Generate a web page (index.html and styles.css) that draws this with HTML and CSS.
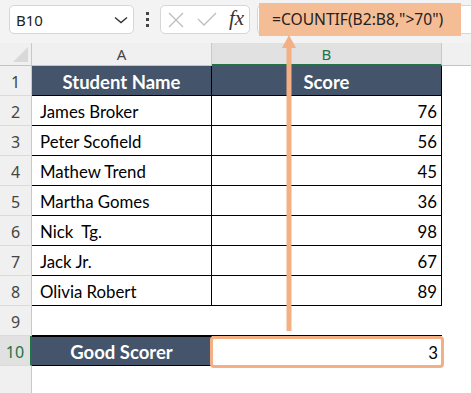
FILE: index.html
```html
<!DOCTYPE html>
<html>
<head>
<meta charset="utf-8">
<link rel="stylesheet" href="styles.css">
</head>
<body>
<div class="toolbar">
  <div class="namebox">
    <span class="ref">B10</span>
    <svg class="chev" width="14" height="8" viewBox="0 0 14 8"><path d="M1 1.5 L7 6.5 L13 1.5" fill="none" stroke="#333" stroke-width="1.4"/></svg>
  </div>
  <div class="dots"><i></i><i></i><i></i></div>
  <div class="fxbox">
    <svg class="ico" width="16" height="16" viewBox="0 0 16 16"><path d="M1 1 L15 15 M15 1 L1 15" stroke="#bdbdbd" stroke-width="1.3" fill="none"/></svg>
    <svg class="ico chk" width="20" height="14" viewBox="0 0 20 14"><path d="M1 7 L7 13 L19 1" stroke="#bdbdbd" stroke-width="1.3" fill="none"/></svg>
    <span class="fx">fx</span>
  </div>
  <div class="formula">
    <span class="hl">=COUNTIF(B2:B8,"&gt;70")</span>
  </div>
</div>

<div class="sheet">
  <div class="colhead">
    <div class="corner"><span class="tri"></span></div>
    <div class="ch cha">A</div>
    <div class="ch chb">B</div>
    <div class="ch chrest"></div>
  </div>

  <div class="row">
    <div class="rh">1</div>
    <div class="c a head">Student Name</div>
    <div class="c b head">Score</div>
  </div>
  <div class="row">
    <div class="rh">2</div>
    <div class="c a">James Broker</div>
    <div class="c b num">76</div>
  </div>
  <div class="row">
    <div class="rh">3</div>
    <div class="c a">Peter Scofield</div>
    <div class="c b num">56</div>
  </div>
  <div class="row">
    <div class="rh">4</div>
    <div class="c a">Mathew Trend</div>
    <div class="c b num">45</div>
  </div>
  <div class="row">
    <div class="rh">5</div>
    <div class="c a">Martha Gomes</div>
    <div class="c b num">36</div>
  </div>
  <div class="row">
    <div class="rh">6</div>
    <div class="c a">Nick&nbsp; Tg.</div>
    <div class="c b num">98</div>
  </div>
  <div class="row">
    <div class="rh">7</div>
    <div class="c a">Jack Jr.</div>
    <div class="c b num">67</div>
  </div>
  <div class="row">
    <div class="rh">8</div>
    <div class="c a">Olivia Robert</div>
    <div class="c b num">89</div>
  </div>
  <div class="row">
    <div class="rh">9</div>
    <div class="c a empty"></div>
    <div class="c b empty"></div>
  </div>
  <div class="row">
    <div class="rh sel">10</div>
    <div class="c a head good">Good Scorer</div>
    <div class="c b num result">3</div>
  </div>
  <div class="row">
    <div class="rh last"></div>
  </div>

  <svg class="arrow" width="16" height="300" viewBox="0 0 16 300">
    <path d="M5.5 12 H10.5 V297 H5.5 Z" fill="#f4b084"/>
    <path d="M8 1 L15 14 L1 14 Z" fill="#f4b084"/>
  </svg>
</div>
</body>
</html>
```
FILE: styles.css
```css
* { box-sizing: border-box; }
body {
  margin: 0;
  width: 471px;
  height: 393px;
  overflow: hidden;
  background: #ffffff;
  font-family: "Noto Sans", "Open Sans", sans-serif;
  position: relative;
}
.toolbar {
  height: 43px;
  background: #f3f3f3;
  display: flex;
  align-items: flex-start;
  padding: 5px 0 0 9px;
}
.namebox {
  width: 125px;
  height: 29px;
  background: #fff;
  border: 1px solid #d6d6d6;
  border-radius: 5px;
  display: flex;
  align-items: center;
  justify-content: space-between;
  padding: 0 5px 0 6px;
}
.ref { font-size: 15px; color: #222; }
.chev { margin-top: 1px; }
.dots {
  width: 26px;
  height: 29px;
  display: flex;
  flex-direction: column;
  align-items: center;
  justify-content: center;
  gap: 3px;
}
.dots i { display: block; width: 3px; height: 3px; background: #444; }
.fxbox {
  width: 90px;
  height: 29px;
  background: #fff;
  border: 1px solid #d6d6d6;
  border-radius: 5px;
  display: flex;
  align-items: center;
  padding-left: 7px;
}
.chk { margin-left: 13px; margin-top: -2px; }
.fx {
  margin-left: 12px;
  font-family: "Liberation Serif", serif;
  font-style: italic;
  font-size: 21px;
  color: #333;
  margin-top: -2px;
}
.formula {
  margin-left: 7px;
  flex: 1;
  height: 29px;
  background: #fff;
  border: 1px solid #d6d6d6;
  border-right: none;
  border-radius: 5px 0 0 5px;
  position: relative;
}
.hl {
  position: absolute;
  left: 1px;
  top: -3px;
  width: 202px;
  height: 33px;
  background: #f5bd95;
  font-size: 15.6px;
  color: #222;
  line-height: 33px;
  padding-left: 13px;
  white-space: nowrap;
}

.sheet { position: relative; }
.colhead {
  display: flex;
  height: 23px;
  background: #f0f0f0;
  border-bottom: 1px solid #c4c4c4;
}
.corner {
  width: 32px;
  border-right: 1px solid #c8c8c8;
  position: relative;
}
.tri {
  position: absolute;
  right: 3px;
  bottom: 3px;
  width: 0; height: 0;
  border-left: 15px solid transparent;
  border-bottom: 15px solid #d9d9d9;
}
.ch {
  font-size: 15px;
  color: #444;
  display: flex;
  align-items: center;
  justify-content: center;
}
.cha { width: 180px; border-right: 1px solid #c8c8c8; }
.chb {
  width: 230px;
  background: #e1e1e1;
  color: #217346;
  border-bottom: 2px solid #217346;
  border-right: 1px solid #c8c8c8;
  margin-bottom: -1px;
}
.chrest { flex: 1; }

.row { display: flex; height: 30px; }
.rh {
  width: 32px;
  background: #f0f0f0;
  border-right: 1px solid #c8c8c8;
  border-bottom: 1px solid #dadada;
  font-size: 16px;
  color: #444;
  display: flex;
  align-items: center;
  justify-content: center;
  padding-top: 3px;
}
.rh.sel {
  background: #e1e1e1;
  color: #217346;
  border-right: 2px solid #217346;
}
.rh.last { height: 27px; border-bottom: none; }
.c {
  font-family: Lato, "Liberation Sans", sans-serif;
  font-size: 16.8px;
  color: #000;
  display: flex;
  align-items: center;
  border-right: 1px solid #000;
  border-bottom: 1px solid #000;
  padding-top: 2px;
}
.a { width: 180px; padding-left: 8px; }
.b { width: 230px; }
.num { justify-content: flex-end; padding-right: 4px; }
.head {
  background: #44546a;
  color: #fff;
  font-weight: bold;
  font-size: 18.5px;
  justify-content: center;
  padding-left: 0;
}
.empty { border-right: none; }
.c.a.empty { border-right: none; }
.good {
  border-top: 1px solid #000;
  border-left: 0;
}
.result {
  position: relative;
  border: none;
}
.result::after {
  content: "";
  position: absolute;
  left: -2px;
  top: 0;
  right: -2px;
  bottom: -2px;
  border: 3px solid #f4b084;
  border-radius: 4px;
}
.arrow {
  position: absolute;
  left: 281px;
  top: -9px;
}
```
